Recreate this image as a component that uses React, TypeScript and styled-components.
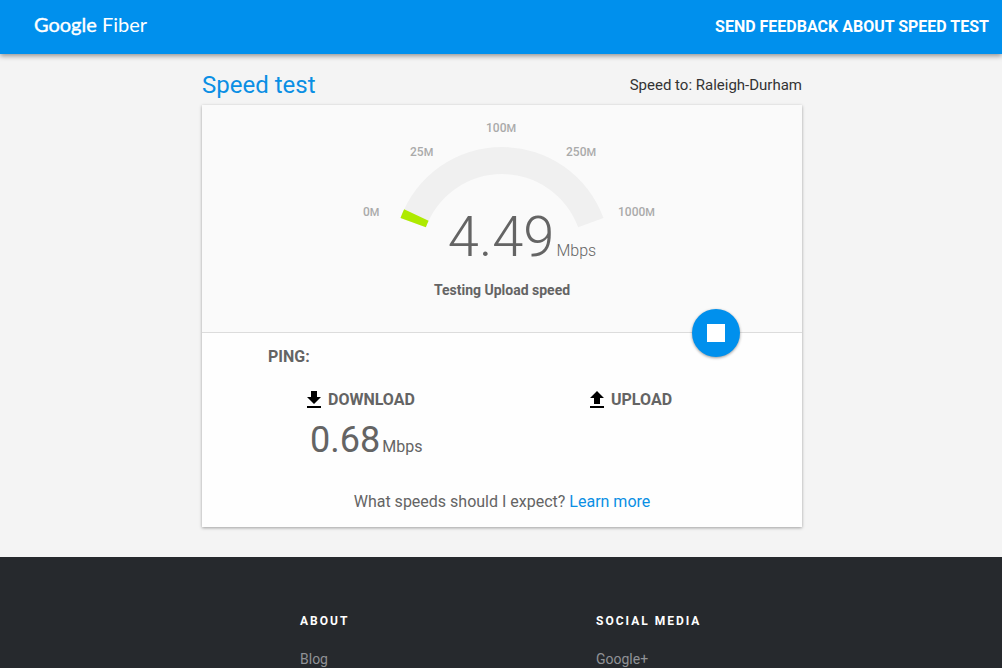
import React from "react";
import styled, { createGlobalStyle } from "styled-components";

const GlobalStyle = createGlobalStyle`
  *, *::before, *::after { box-sizing: border-box; }
  html { scrollbar-width: none; }
  body {
    margin: 0;
    background: #f4f4f4;
    color: #646464;
    font-family: Roboto, "Liberation Sans", sans-serif;
    font-size: 16px;
    line-height: 24px;
  }
  h1, h2, p, ul { margin: 0; padding: 0; }
  a { text-decoration: none; }
`;

const Header = styled.header`
  position: relative;
  display: flex;
  align-items: center;
  justify-content: space-between;
  height: 54px;
  padding: 0 13px 0 34px;
  background: #0090ed;
  box-shadow: 0 2px 5px rgba(0, 0, 0, 0.4);
`;

const Logo = styled.a`
  padding-bottom: 6px;
  color: #fff;
  font-family: Lato, Roboto, sans-serif;
  font-size: 20px;
  font-weight: 400;
`;

const LogoMark = styled.span`
  -webkit-text-stroke: 0.4px #fff;
`;

const FeedbackLink = styled.a`
  color: #fff;
  font-weight: 700;
  text-transform: uppercase;
`;

const Main = styled.main`
  width: 100%;
  max-width: 602px;
  margin: 0 auto;
  padding: 15px 0 30px 2px;
`;

const TitleRow = styled.div`
  display: flex;
  align-items: center;
  justify-content: space-between;
  height: 32px;
  margin-bottom: 4px;
`;

const Title = styled.h1`
  color: #0a8fe4;
  font-size: 24px;
  font-weight: 400;
`;

const Server = styled.p`
  color: #333;
  font-size: 15px;
`;

const Card = styled.section`
  background: #fefefe;
  box-shadow: 0 1px 3px rgba(0, 0, 0, 0.35);
`;

const GaugePanel = styled.div`
  position: relative;
  display: flex;
  flex-direction: column;
  align-items: center;
  height: 228px;
  padding-top: 12px;
  background: #fafafa;
  border-bottom: 1px solid #dcdcdc;
`;

const GaugeStack = styled.div`
  display: grid;
  grid-template-rows: 154px;
  justify-items: center;
  & > * { grid-area: 1 / 1; }
`;

const TickLabel = styled.text`
  fill: #aaa;
  font-size: 12px;
  font-weight: 500;
`;

const Reading = styled.p`
  display: flex;
  align-items: baseline;
  gap: 2px;
  line-height: 40px;
`;

const GaugeReading = styled(Reading)`
  align-self: end;
  margin-left: 40px;
  font-weight: 300;
`;

const Figure = styled.span<{ $large?: boolean }>`
  font-size: ${(p) => (p.$large ? 56 : 36)}px;
`;

const Status = styled.p`
  margin-top: 7px;
  font-size: 14px;
  font-weight: 700;
`;

const StopButton = styled.button`
  position: absolute;
  right: 62px;
  bottom: -25px;
  display: grid;
  place-items: center;
  width: 48px;
  height: 48px;
  padding: 0;
  border: 0;
  border-radius: 50%;
  background: #0090ed;
  box-shadow: 0 1px 3px rgba(0, 0, 0, 0.4);
  cursor: pointer;
`;

const StopMark = styled.span`
  width: 18px;
  height: 18px;
  background: #fff;
`;

const Results = styled.div`
  padding: 12px 17px 13px;
`;

const Ping = styled.p`
  padding-left: 49px;
  font-weight: 700;
`;

const ResultGrid = styled.div`
  display: grid;
  grid-template-columns: 1fr 1fr;
  min-height: 102px;
  margin-top: 19px;
`;

const Result = styled.div`
  padding-left: 83px;
`;

const ResultTitle = styled.h2`
  display: flex;
  align-items: center;
  gap: 2px;
  font-size: 16px;
  font-weight: 700;
  text-transform: uppercase;
`;

const ResultReading = styled(Reading)`
  margin: 8px 0 0 8px;
`;

const Expect = styled.p`
  text-align: center;
`;

const BlueLink = styled.a`
  color: #0a8fe4;
`;

const Footer = styled.footer`
  background: #26292d;
  padding: 52px 0 0;
`;

const FooterGrid = styled.div`
  display: grid;
  grid-template-columns: 296px 1fr;
  width: 100%;
  max-width: 600px;
  margin: 0 auto;
  padding-left: 99px;
`;

const FooterTitle = styled.h2`
  color: #fff;
  font-size: 12px;
  font-weight: 700;
  letter-spacing: 2px;
  text-transform: uppercase;
`;

const FooterList = styled.ul`
  margin-top: 14px;
  list-style: none;
`;

const FooterLink = styled.a`
  color: #909296;
  font-size: 14px;
`;

const CX = 155;
const CY = 138;
const OUTER = 108;
const INNER = 81;

/* Ring segment between two angles, measured in degrees above the left horizon. */
function ring(from: number, to: number) {
  const pt = (r: number, deg: number) => {
    const a = (deg * Math.PI) / 180;
    return `${(CX - r * Math.cos(a)).toFixed(2)} ${(CY - r * Math.sin(a)).toFixed(2)}`;
  };
  return `M${pt(OUTER, from)}A${OUTER} ${OUTER} 0 0 1 ${pt(OUTER, to)}L${pt(INNER, to)}A${INNER} ${INNER} 0 0 0 ${pt(INNER, from)}Z`;
}

const ticks = [
  { value: "0", x: 16, y: 99 },
  { value: "25", x: 63, y: 39 },
  { value: "100", x: 139, y: 15 },
  { value: "250", x: 219, y: 39 },
  { value: "1000", x: 271, y: 99 },
];

const results = [
  { name: "Download", value: "0.68", icon: "M19 9h-4V3H9v6H5l7 7 7-7zM5 18v2h14v-2H5z" },
  { name: "Upload", value: null, icon: "M9 16h6v-6h4l-7-7-7 7h4v6zM5 18h14v2H5v-2z" },
];

const footerColumns = [
  { title: "About", links: ["Blog"] },
  { title: "Social Media", links: ["Google+"] },
];

function Gauge() {
  return (
    <svg width="310" height="118" viewBox="0 0 310 118" role="img" aria-label="Speed gauge">
      <path d={ring(20, 160)} fill="#f0f0f0" />
      <path d={ring(20, 25)} fill="#aeea00" />
      {ticks.map((t) => (
        <TickLabel key={t.value} x={t.x} y={t.y}>
          {t.value}
          <tspan fontSize="11">M</tspan>
        </TickLabel>
      ))}
    </svg>
  );
}

export default function App() {
  return (
    <>
      <GlobalStyle />
      <Header>
        <Logo href="#">
          <LogoMark>Google</LogoMark> Fiber
        </Logo>
        <FeedbackLink href="#">Send feedback about speed test</FeedbackLink>
      </Header>
      <Main>
        <TitleRow>
          <Title>Speed test</Title>
          <Server>Speed to: Raleigh-Durham</Server>
        </TitleRow>
        <Card>
          <GaugePanel>
            <GaugeStack>
              <Gauge />
              <GaugeReading>
                <Figure $large>4.49</Figure>
                <span>Mbps</span>
              </GaugeReading>
            </GaugeStack>
            <Status>Testing Upload speed</Status>
            <StopButton type="button" aria-label="Stop test">
              <StopMark />
            </StopButton>
          </GaugePanel>
          <Results>
            <Ping>PING:</Ping>
            <ResultGrid>
              {results.map((r) => (
                <Result key={r.name}>
                  <ResultTitle>
                    <svg width="24" height="24" viewBox="0 0 24 24" aria-hidden="true">
                      <path d={r.icon} fill="#000" />
                    </svg>
                    {r.name}
                  </ResultTitle>
                  {r.value && (
                    <ResultReading>
                      <Figure>{r.value}</Figure>
                      <span>Mbps</span>
                    </ResultReading>
                  )}
                </Result>
              ))}
            </ResultGrid>
            <Expect>
              What speeds should I expect? <BlueLink href="#">Learn more</BlueLink>
            </Expect>
          </Results>
        </Card>
      </Main>
      <Footer>
        <FooterGrid>
          {footerColumns.map((c) => (
            <div key={c.title}>
              <FooterTitle>{c.title}</FooterTitle>
              <FooterList>
                {c.links.map((l) => (
                  <li key={l}>
                    <FooterLink href="#">{l}</FooterLink>
                  </li>
                ))}
              </FooterList>
            </div>
          ))}
        </FooterGrid>
      </Footer>
    </>
  );
}
